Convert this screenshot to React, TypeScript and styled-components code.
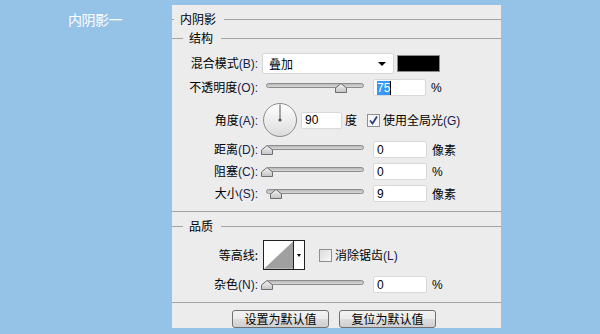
import React from "react";
import styled, { createGlobalStyle } from "styled-components";

const Global = createGlobalStyle`
  html, body { margin: 0; padding: 0; }
  body {
    background: #95c3e8;
    font-family: "Noto Sans CJK SC", "Liberation Sans", sans-serif;
    font-size: 12px;
    color: #000;
  }
`;

const Page = styled.div`
  width: 600px;
  height: 334px;
  display: flex;
  padding-top: 5px;
  box-sizing: border-box;
`;

const Side = styled.div`
  width: 172px;
  box-sizing: border-box;
  padding-left: 68px;
  padding-top: 3px;
  color: #fff;
  font-size: 14px;
  line-height: 22px;
  letter-spacing: -0.5px;
`;

const Panel = styled.div`
  width: 329px;
  height: 323px;
  background: #ececec;
  display: flex;
  flex-direction: column;
  padding-top: 3px;
  box-sizing: border-box;
`;

const Header = styled.div<{ $h: number; $lead: number }>`
  height: ${(p) => p.$h}px;
  display: flex;
  align-items: center;
  &::before {
    content: "";
    width: ${(p) => p.$lead}px;
    height: 1px;
    background: #a3a3a3;
    margin-right: 6px;
  }
  &::after {
    content: "";
    flex: 1;
    height: 1px;
    background: #a3a3a3;
    margin-left: 8px;
  }
`;

const HeaderText = styled.span`
  line-height: 14px;
`;

const Rule = styled.div<{ $mt: number }>`
  margin-top: ${(p) => p.$mt}px;
  height: 1px;
  background: #a3a3a3;
`;

const Row = styled.div<{ $h: number; $mt: number }>`
  display: grid;
  grid-template-columns: 86px 1fr;
  column-gap: 4px;
  align-items: center;
  height: ${(p) => p.$h}px;
  margin-top: ${(p) => p.$mt}px;
`;

const Label = styled.div`
  text-align: right;
  white-space: nowrap;
  line-height: 14px;
`;

const Key = styled.span`
  font-family: "Liberation Sans", sans-serif;
  color: #14204a;
`;

const Controls = styled.div<{ $gap?: number }>`
  display: flex;
  align-items: center;
  gap: ${(p) => p.$gap ?? 5}px;
`;

const Select = styled.div`
  width: 132px;
  height: 21px;
  box-sizing: border-box;
  background: #fff;
  border: 1px solid #d6d6d6;
  border-radius: 2px;
  display: flex;
  align-items: center;
  justify-content: space-between;
  padding: 0 7px 0 6px;
`;

const Arrow = styled.span`
  width: 0;
  height: 0;
  border-left: 4px solid transparent;
  border-right: 4px solid transparent;
  border-top: 4px solid #000;
`;

const Swatch = styled.div`
  width: 43px;
  height: 17px;
  box-sizing: border-box;
  background: #000;
  border: 1px solid #8a8a8a;
  margin-left: -1px;
`;

const Input = styled.div<{ $w: number }>`
  width: ${(p) => p.$w}px;
  height: 17px;
  box-sizing: border-box;
  background: #fff;
  border: 1px solid #d8d8d8;
  border-radius: 2px;
  display: flex;
  align-items: center;
  padding-left: 3px;
  font-family: "Liberation Sans", sans-serif;
  font-size: 12px;
  color: #000;
`;

const Selected = styled.span`
  background: #3399ff;
  color: #fff;
  line-height: 14px;
  border-right: 1px solid #000;
`;

const Unit = styled.span<{ $latin?: boolean }>`
  font-family: ${(p) => (p.$latin ? '"Liberation Sans", sans-serif' : '"Noto Sans CJK SC", sans-serif')};
  line-height: 14px;
`;

const SliderBox = styled.div`
  position: relative;
  width: 106px;
  height: 17px;
  flex: none;
`;

const Track = styled.div`
  margin: 4px 0 0 4px;
  width: 98px;
  height: 5px;
  box-sizing: border-box;
  border: 1px solid #8c8c8c;
  border-radius: 3px;
  background: linear-gradient(#b8b8b8, #d8d8d8);
`;

const Thumb = styled.svg`
  position: absolute;
  top: 4px;
`;

const Slider = ({ frac }: { frac: number }) => (
  <SliderBox>
    <Track />
    <Thumb width="12" height="10" viewBox="0 0 12 10" style={{ left: 4 + frac * 98 - 6 }}>
      <defs>
        <linearGradient id="tg" x1="0" y1="0" x2="0" y2="1">
          <stop offset="0" stopColor="#f4f4f4" />
          <stop offset="1" stopColor="#c4c4c4" />
        </linearGradient>
      </defs>
      <path d="M6 0.5 L11.5 5 L11.5 9.5 L0.5 9.5 L0.5 5 Z" fill="url(#tg)" stroke="#6e6e6e" strokeWidth="1" />
    </Thumb>
  </SliderBox>
);

const Dial = () => (
  <svg width="36" height="36" viewBox="0 0 36 36" style={{ marginLeft: 0 }}>
    <defs>
      <linearGradient id="dg" x1="0" y1="0" x2="0" y2="1">
        <stop offset="0" stopColor="#ffffff" />
        <stop offset="1" stopColor="#dcdcdc" />
      </linearGradient>
    </defs>
    <circle cx="18" cy="18" r="16.5" fill="url(#dg)" stroke="#8c8c8c" strokeWidth="1" />
    <line x1="18" y1="2.5" x2="18" y2="18" stroke="#555" strokeWidth="1" />
    <circle cx="18" cy="18" r="1.6" fill="#555" />
  </svg>
);

const Check = styled.div<{ $on?: boolean }>`
  width: 13px;
  height: 13px;
  box-sizing: border-box;
  border: 1px solid #8e8f8f;
  background: ${(p) => (p.$on ? "#f6f6f6" : "linear-gradient(135deg, #dcdcdc, #f8f8f8)")};
  display: flex;
  align-items: center;
  justify-content: center;
  flex: none;
`;

const CheckLabel = styled.span`
  line-height: 14px;
  white-space: nowrap;
`;

const Contour = styled.div`
  width: 42px;
  height: 30px;
  box-sizing: border-box;
  border: 1px solid #222;
  display: flex;
  margin-left: 1px;
  background: #fff;
`;

const ContourArrow = styled.div`
  width: 10px;
  border-left: 1px solid #222;
  display: flex;
  align-items: center;
  justify-content: center;
`;

const SmallArrow = styled.span`
  width: 0;
  height: 0;
  border-left: 2.5px solid transparent;
  border-right: 2.5px solid transparent;
  border-top: 3px solid #000;
`;

const Buttons = styled.div`
  margin-top: 7px;
  display: flex;
  gap: 10px;
  padding-left: 60px;
`;

const Button = styled.div`
  width: 97px;
  height: 18px;
  box-sizing: border-box;
  border: 1px solid #707070;
  border-radius: 3px;
  background: linear-gradient(#f3f3f3 0%, #ebebeb 50%, #dddddd 51%, #cfcfcf 100%);
  display: flex;
  align-items: center;
  justify-content: center;
  line-height: 14px;
`;

const L = ({ t, k }: { t: string; k: string }) => (
  <Label>
    {t}
    <Key>({k}):</Key>
  </Label>
);

export default function App() {
  return (
    <>
      <Global />
      <Page>
        <Side>内阴影一</Side>
        <Panel>
          <Header $h={22} $lead={2}>
            <HeaderText>内阴影</HeaderText>
          </Header>
          <Header $h={16} $lead={11}>
            <HeaderText>结构</HeaderText>
          </Header>

          <Row $h={21} $mt={7}>
            <L t="混合模式" k="B" />
            <Controls $gap={4}>
              <Select>
                <span>叠加</span>
                <Arrow />
              </Select>
              <Swatch />
            </Controls>
          </Row>

          <Row $h={17} $mt={5}>
            <L t="不透明度" k="O" />
            <Controls $gap={5}>
              <Slider frac={0.765} />
              <Input $w={53}>
                <Selected>75</Selected>
              </Input>
              <Unit $latin>%</Unit>
            </Controls>
          </Row>

          <Row $h={34} $mt={6}>
            <L t="角度" k="A" />
            <Controls $gap={0}>
              <Dial />
              <Input $w={41} style={{ marginLeft: 3 }}>90</Input>
              <Unit style={{ marginLeft: 3 }}>度</Unit>
              <Check $on style={{ marginLeft: 10 }}>
                <svg width="11" height="11" viewBox="0 0 11 11">
                  <path d="M2 5.5 L4.5 8.5 L9 1.5" fill="none" stroke="#2b3f7e" strokeWidth="1.8" />
                </svg>
              </Check>
              <CheckLabel style={{ marginLeft: 3 }}>
                使用全局光<Key>(G)</Key>
              </CheckLabel>
            </Controls>
          </Row>

          <Row $h={17} $mt={5}>
            <L t="距离" k="D" />
            <Controls $gap={5}>
              <Slider frac={0.01} />
              <Input $w={54}>0</Input>
              <Unit>像素</Unit>
            </Controls>
          </Row>

          <Row $h={17} $mt={5}>
            <L t="阻塞" k="C" />
            <Controls $gap={5}>
              <Slider frac={0.01} />
              <Input $w={54}>0</Input>
              <Unit $latin>%</Unit>
            </Controls>
          </Row>

          <Row $h={17} $mt={5}>
            <L t="大小" k="S" />
            <Controls $gap={5}>
              <Slider frac={0.1} />
              <Input $w={54}>9</Input>
              <Unit>像素</Unit>
            </Controls>
          </Row>

          <Rule $mt={9} />

          <Header $h={28} $lead={11}>
            <HeaderText>品质</HeaderText>
          </Header>

          <Row $h={30} $mt={0}>
            <Label>等高线:</Label>
            <Controls $gap={0}>
              <Contour>
                <svg width="30" height="28" viewBox="0 0 30 28" style={{ display: "block" }}>
                  <rect width="30" height="28" fill="#fff" />
                  <path d="M0 28 L30 0 L30 28 Z" fill="#a0a0a0" />
                </svg>
                <ContourArrow>
                  <SmallArrow />
                </ContourArrow>
              </Contour>
              <Check style={{ marginLeft: 14 }} />
              <CheckLabel style={{ marginLeft: 3 }}>
                消除锯齿<Key>(L)</Key>
              </CheckLabel>
            </Controls>
          </Row>

          <Row $h={17} $mt={6}>
            <L t="杂色" k="N" />
            <Controls $gap={5}>
              <Slider frac={0.01} />
              <Input $w={54}>0</Input>
              <Unit $latin>%</Unit>
            </Controls>
          </Row>

          <Rule $mt={9} />

          <Buttons>
            <Button>设置为默认值</Button>
            <Button>复位为默认值</Button>
          </Buttons>
        </Panel>
      </Page>
    </>
  );
}
